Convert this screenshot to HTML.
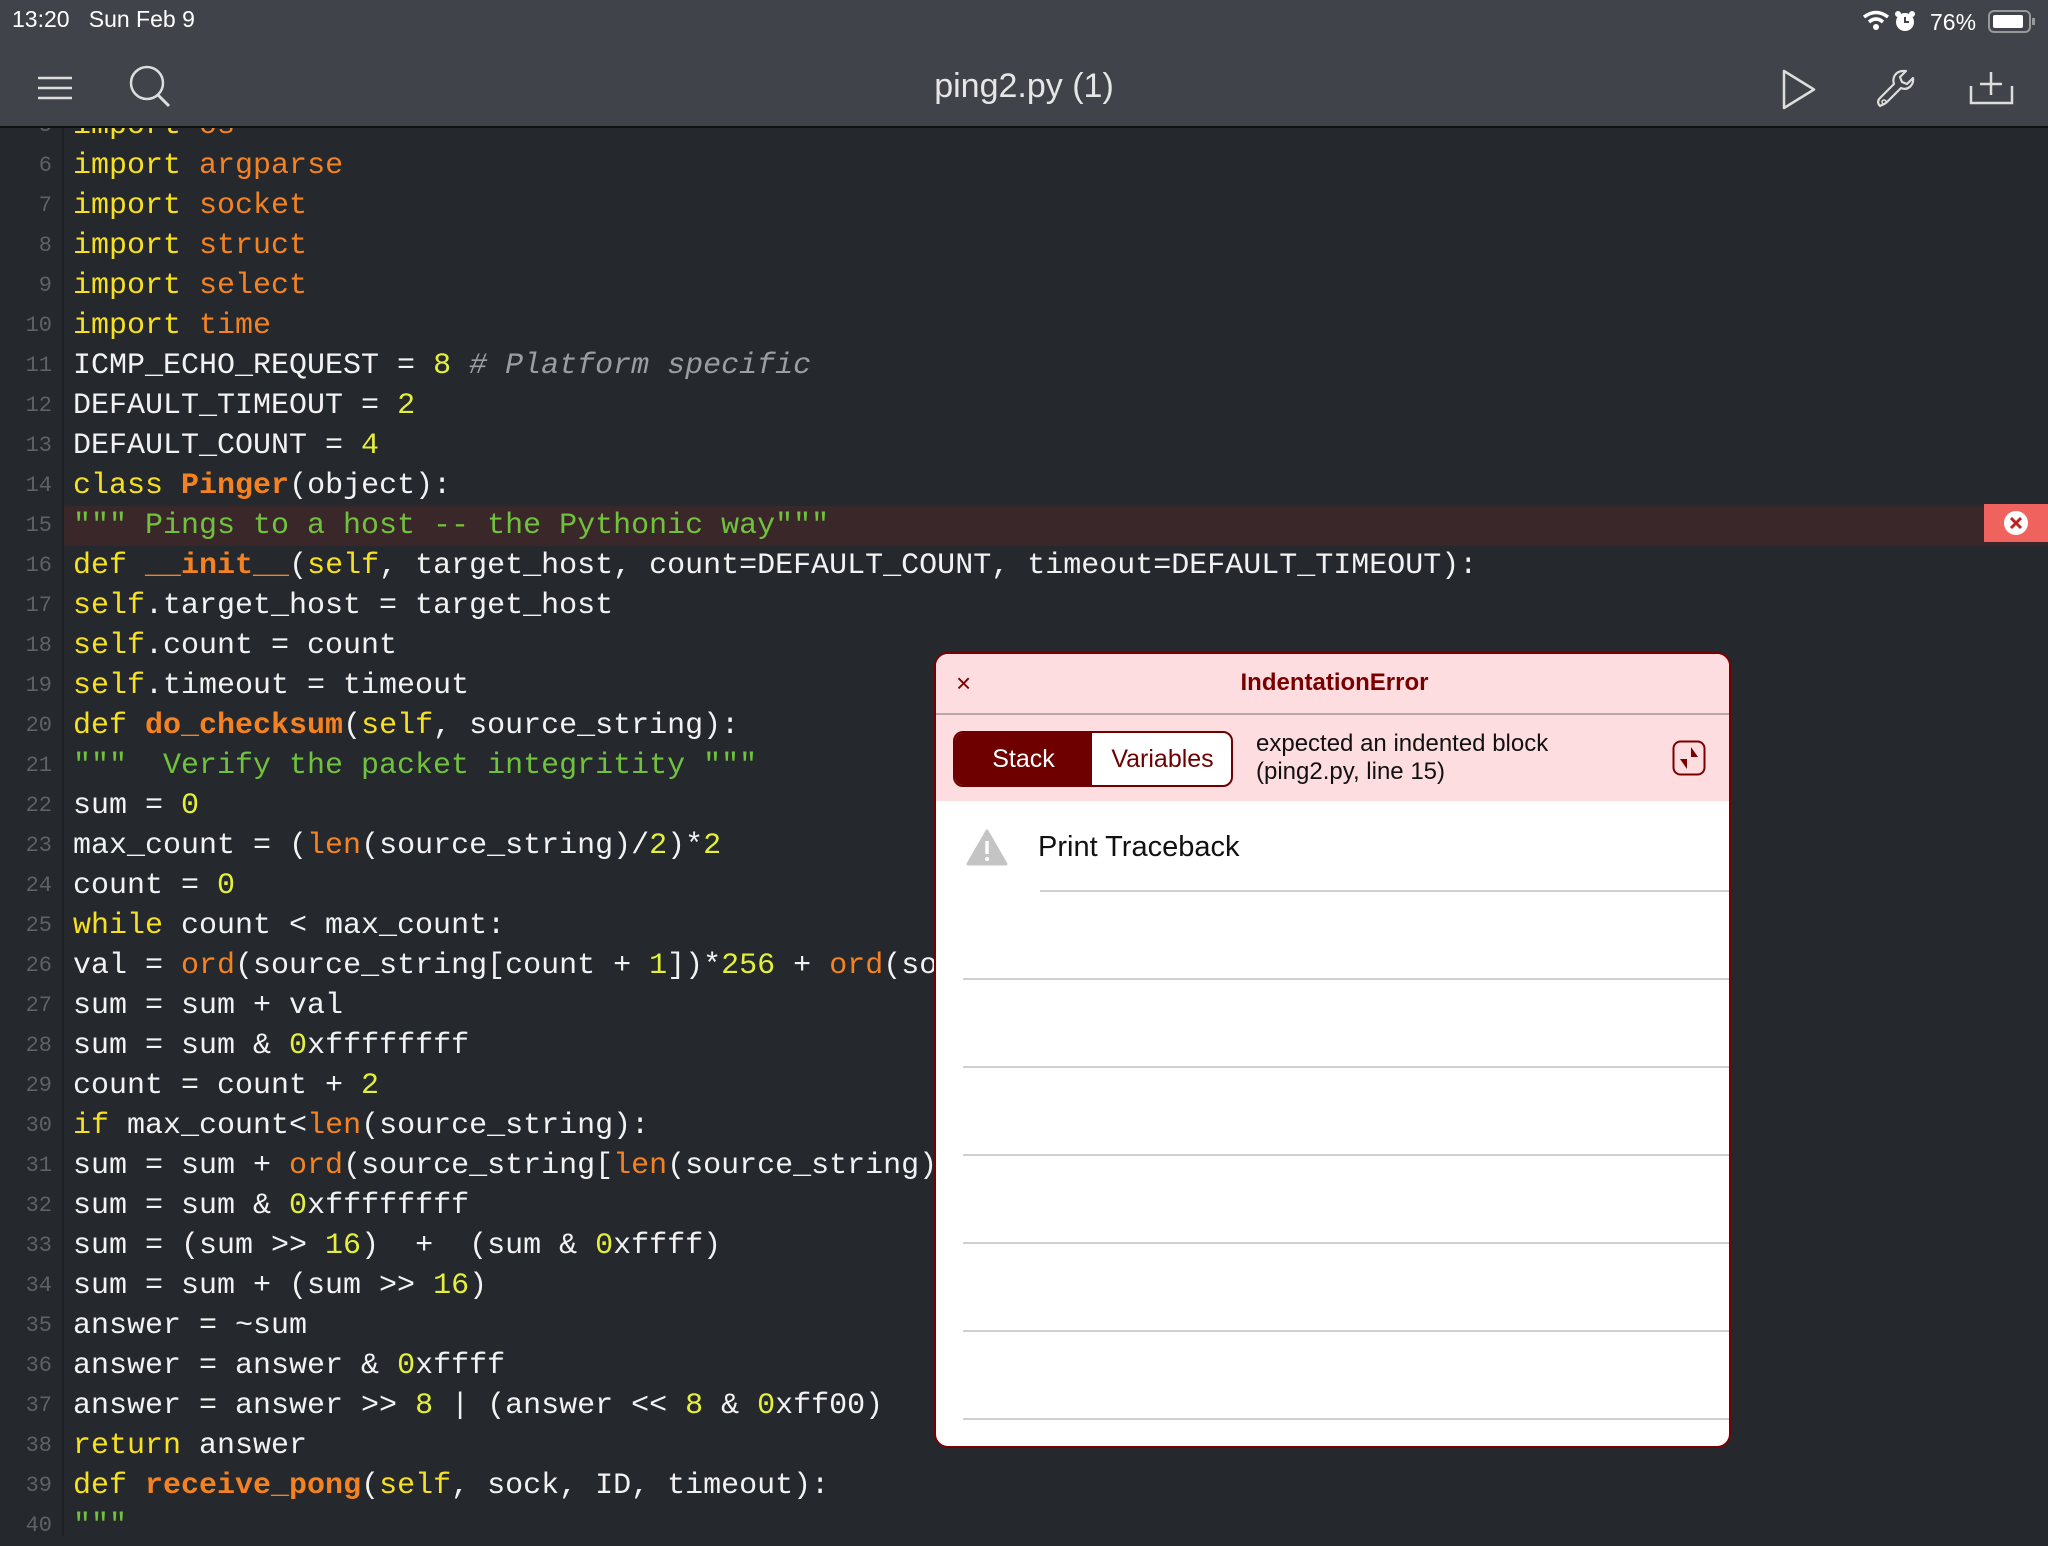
<!DOCTYPE html>
<html><head><meta charset="utf-8"><style>
*{margin:0;padding:0;box-sizing:border-box}
body{width:2048px;height:1536px;overflow:hidden;background:#25292e;font-family:"Liberation Sans",sans-serif;position:relative}
#top{position:absolute;left:0;top:0;width:2048px;height:128px;background:#404349;border-bottom:2px solid #111;z-index:5}
.st{position:absolute;color:#fff;font-size:23px;top:6px}
.title{position:absolute;left:0;width:2048px;text-align:center;top:64px;color:#e6e6e6;font-size:34px}
#code{position:absolute;left:0;top:3px;width:2048px;height:1536px;font-family:"Liberation Mono",monospace;font-size:30px;color:#f2f2f2}
.gut{position:absolute;left:62px;top:125px;width:2px;height:1408px;background:#1e2125}
.l{position:absolute;left:0;height:40px;line-height:40px;white-space:pre;width:2048px}
.n{position:absolute;left:0;width:52px;text-align:right;color:#5d6168;font-size:22px}
.t{position:absolute;left:73px}
.k{color:#f7e01f}.o{color:#f48221}.b{color:#f48221;font-weight:bold}.d{color:#e4ef3a}.c{color:#9a9ea4;font-style:italic}.s{color:#70c13c}
#panel{position:absolute;left:934px;top:652px;width:797px;height:796px;background:#fff;border:2px solid #7a0000;border-radius:14px;overflow:hidden;z-index:6}
</style></head><body>
<div id="code">
<div class="gut"></div>
<div class="l" style="top:103px"><span class="n">5</span><span class="t"><span class="k">import</span> <span class="o">os</span></span></div>
<div class="l" style="top:143px"><span class="n">6</span><span class="t"><span class="k">import</span> <span class="o">argparse</span></span></div>
<div class="l" style="top:183px"><span class="n">7</span><span class="t"><span class="k">import</span> <span class="o">socket</span></span></div>
<div class="l" style="top:223px"><span class="n">8</span><span class="t"><span class="k">import</span> <span class="o">struct</span></span></div>
<div class="l" style="top:263px"><span class="n">9</span><span class="t"><span class="k">import</span> <span class="o">select</span></span></div>
<div class="l" style="top:303px"><span class="n">10</span><span class="t"><span class="k">import</span> <span class="o">time</span></span></div>
<div class="l" style="top:343px"><span class="n">11</span><span class="t">ICMP_ECHO_REQUEST = <span class="d">8</span> <span class="c"># Platform specific</span></span></div>
<div class="l" style="top:383px"><span class="n">12</span><span class="t">DEFAULT_TIMEOUT = <span class="d">2</span></span></div>
<div class="l" style="top:423px"><span class="n">13</span><span class="t">DEFAULT_COUNT = <span class="d">4</span></span></div>
<div class="l" style="top:463px"><span class="n">14</span><span class="t"><span class="k">class</span> <span class="b">Pinger</span>(object):</span></div>
<div class="l" style="top:503px;background:linear-gradient(90deg,transparent 64px,#3a2729 64px)"><span class="n">15</span><span class="t"><span class="s">""" Pings to a host -- the Pythonic way"""</span></span></div>
<div class="l" style="top:543px"><span class="n">16</span><span class="t"><span class="k">def</span> <span class="b">__init__</span>(<span class="k">self</span>, target_host, count=DEFAULT_COUNT, timeout=DEFAULT_TIMEOUT):</span></div>
<div class="l" style="top:583px"><span class="n">17</span><span class="t"><span class="k">self</span>.target_host = target_host</span></div>
<div class="l" style="top:623px"><span class="n">18</span><span class="t"><span class="k">self</span>.count = count</span></div>
<div class="l" style="top:663px"><span class="n">19</span><span class="t"><span class="k">self</span>.timeout = timeout</span></div>
<div class="l" style="top:703px"><span class="n">20</span><span class="t"><span class="k">def</span> <span class="b">do_checksum</span>(<span class="k">self</span>, source_string):</span></div>
<div class="l" style="top:743px"><span class="n">21</span><span class="t"><span class="s">"""  Verify the packet integritity """</span></span></div>
<div class="l" style="top:783px"><span class="n">22</span><span class="t">sum = <span class="d">0</span></span></div>
<div class="l" style="top:823px"><span class="n">23</span><span class="t">max_count = (<span class="o">len</span>(source_string)/<span class="d">2</span>)*<span class="d">2</span></span></div>
<div class="l" style="top:863px"><span class="n">24</span><span class="t">count = <span class="d">0</span></span></div>
<div class="l" style="top:903px"><span class="n">25</span><span class="t"><span class="k">while</span> count &lt; max_count:</span></div>
<div class="l" style="top:943px"><span class="n">26</span><span class="t">val = <span class="o">ord</span>(source_string[count + <span class="d">1</span>])*<span class="d">256</span> + <span class="o">ord</span>(source_string[count])</span></div>
<div class="l" style="top:983px"><span class="n">27</span><span class="t">sum = sum + val</span></div>
<div class="l" style="top:1023px"><span class="n">28</span><span class="t">sum = sum &amp; <span class="d">0</span>xffffffff</span></div>
<div class="l" style="top:1063px"><span class="n">29</span><span class="t">count = count + <span class="d">2</span></span></div>
<div class="l" style="top:1103px"><span class="n">30</span><span class="t"><span class="k">if</span> max_count&lt;<span class="o">len</span>(source_string):</span></div>
<div class="l" style="top:1143px"><span class="n">31</span><span class="t">sum = sum + <span class="o">ord</span>(source_string[<span class="o">len</span>(source_string) - <span class="d">1</span>])</span></div>
<div class="l" style="top:1183px"><span class="n">32</span><span class="t">sum = sum &amp; <span class="d">0</span>xffffffff</span></div>
<div class="l" style="top:1223px"><span class="n">33</span><span class="t">sum = (sum &gt;&gt; <span class="d">16</span>)  +  (sum &amp; <span class="d">0</span>xffff)</span></div>
<div class="l" style="top:1263px"><span class="n">34</span><span class="t">sum = sum + (sum &gt;&gt; <span class="d">16</span>)</span></div>
<div class="l" style="top:1303px"><span class="n">35</span><span class="t">answer = ~sum</span></div>
<div class="l" style="top:1343px"><span class="n">36</span><span class="t">answer = answer &amp; <span class="d">0</span>xffff</span></div>
<div class="l" style="top:1383px"><span class="n">37</span><span class="t">answer = answer &gt;&gt; <span class="d">8</span> | (answer &lt;&lt; <span class="d">8</span> &amp; <span class="d">0</span>xff00)</span></div>
<div class="l" style="top:1423px"><span class="n">38</span><span class="t"><span class="k">return</span> answer</span></div>
<div class="l" style="top:1463px"><span class="n">39</span><span class="t"><span class="k">def</span> <span class="b">receive_pong</span>(<span class="k">self</span>, sock, ID, timeout):</span></div>
<div class="l" style="top:1503px"><span class="n">40</span><span class="t"><span class="s">"""</span></span></div>
</div>

<div style="position:absolute;left:1984px;top:504px;width:64px;height:38px;background:#f0625e;z-index:4">
<svg width="64" height="38"><circle cx="32" cy="19" r="12" fill="#fff"/><path d="M27 14l10 10M37 14l-10 10" stroke="#c0201e" stroke-width="3"/></svg></div>

<div id="top">
<div class="st" style="left:12px">13:20&nbsp;&nbsp;&nbsp;Sun Feb 9</div>
<svg style="position:absolute;left:1862px;top:8px" width="180" height="28">
<path d="M2 9 Q14 0 26 9" stroke="#fff" stroke-width="3.5" fill="none"/><path d="M7 14 Q14 8 21 14" stroke="#fff" stroke-width="3.5" fill="none"/><circle cx="14" cy="19" r="3" fill="#fff"/>
<circle cx="43" cy="14" r="9" fill="#fff"/><path d="M43 9v5h4" stroke="#404349" stroke-width="2" fill="none"/><circle cx="36" cy="6" r="3" fill="#fff"/><circle cx="50" cy="6" r="3" fill="#fff"/>
<text x="68" y="22" fill="#fff" font-size="23" font-family="Liberation Sans">76%</text>
<rect x="127" y="3" width="41" height="21" rx="5" stroke="#999" stroke-width="2" fill="none"/><rect x="131" y="7" width="30" height="13" rx="2" fill="#fff"/><rect x="170" y="10" width="3" height="7" fill="#999"/>
</svg>
<svg style="position:absolute;left:36px;top:72px" width="40" height="32"><path d="M2 6h34M2 16h34M2 26h34" stroke="#ddd" stroke-width="2.5"/></svg>
<svg style="position:absolute;left:126px;top:62px" width="52" height="50"><circle cx="21" cy="21" r="16" stroke="#ddd" stroke-width="2.5" fill="none"/><path d="M32 33l11 11" stroke="#ddd" stroke-width="3"/></svg>
<div class="title" style="top:64px;line-height:44px">ping2.py (1)</div>
<svg style="position:absolute;left:1780px;top:68px" width="40" height="44"><path d="M4 3v37l30-18.5z" stroke="#ddd" stroke-width="2.5" fill="none" stroke-linejoin="round"/></svg>
<svg style="position:absolute;left:1874px;top:68px" width="44" height="44"><path d="M6 38c-3-3-2-6 0-8l14-14c-2-6 1-12 8-13l4 0-6 6 2 5 5 2 6-6c1 7-5 13-12 10l-14 14c-2 2-5 3-7 4z" stroke="#ddd" stroke-width="2.2" fill="none" stroke-linejoin="round"/><circle cx="10" cy="34" r="2" stroke="#ddd" stroke-width="1.5" fill="none"/></svg>
<svg style="position:absolute;left:1969px;top:70px" width="46" height="36"><path d="M2 16v17h41V16M22 2v23M11 14h22" stroke="#ddd" stroke-width="2.5" fill="none"/></svg>
</div>

<div id="panel">
<div style="position:absolute;left:0;top:0;width:797px;height:61px;background:#fddde0;border-bottom:2px solid #b8a5a7"></div>
<div style="position:absolute;left:20px;top:14px;color:#7a0000;font-size:26px">×</div>
<div style="position:absolute;left:0;width:797px;top:15px;text-align:center;color:#7a0000;font-size:24px;font-weight:bold">IndentationError</div>
<div style="position:absolute;left:0;top:61px;width:797px;height:86px;background:#fddde0"></div>
<div style="position:absolute;left:17px;top:77px;width:280px;height:56px;border:2px solid #6e0000;border-radius:10px;overflow:hidden;font-size:25px;background:#fff">
<div style="position:absolute;left:0;top:0;width:137px;height:52px;background:#6e0000;color:#fff;text-align:center;line-height:52px">Stack</div>
<div style="position:absolute;left:137px;top:0;width:141px;height:52px;color:#6e0000;text-align:center;line-height:52px">Variables</div>
</div>
<div style="position:absolute;left:320px;top:76px;font-size:24px;color:#111;line-height:28px">expected an indented block<br>(ping2.py, line 15)</div>
<svg style="position:absolute;left:736px;top:86px" width="36" height="38"><rect x="1.5" y="1.5" width="31" height="33" rx="7" stroke="#7a0000" stroke-width="2" fill="none"/><path d="M19 7v10h7zM15 29V19H8z" fill="#7a0000"/></svg>
<svg style="position:absolute;left:30px;top:175px" width="42" height="38"><path d="M21 2L40 35H2z" fill="#c4c4c4" stroke="#c4c4c4" stroke-linejoin="round" stroke-width="3"/><path d="M21 12v13" stroke="#fff" stroke-width="3.5"/><circle cx="21" cy="30" r="2" fill="#fff"/></svg>
<div style="position:absolute;left:102px;top:177px;font-size:29px;color:#111">Print Traceback</div>
<div style="position:absolute;left:104px;top:236px;width:700px;height:2px;background:#d0d0d0"></div>
<div style="position:absolute;left:27px;top:324px;width:780px;height:2px;background:#d0d0d0"></div>
<div style="position:absolute;left:27px;top:412px;width:780px;height:2px;background:#d0d0d0"></div>
<div style="position:absolute;left:27px;top:500px;width:780px;height:2px;background:#d0d0d0"></div>
<div style="position:absolute;left:27px;top:588px;width:780px;height:2px;background:#d0d0d0"></div>
<div style="position:absolute;left:27px;top:676px;width:780px;height:2px;background:#d0d0d0"></div>
<div style="position:absolute;left:27px;top:764px;width:780px;height:2px;background:#d0d0d0"></div>
</div>
</body></html>
